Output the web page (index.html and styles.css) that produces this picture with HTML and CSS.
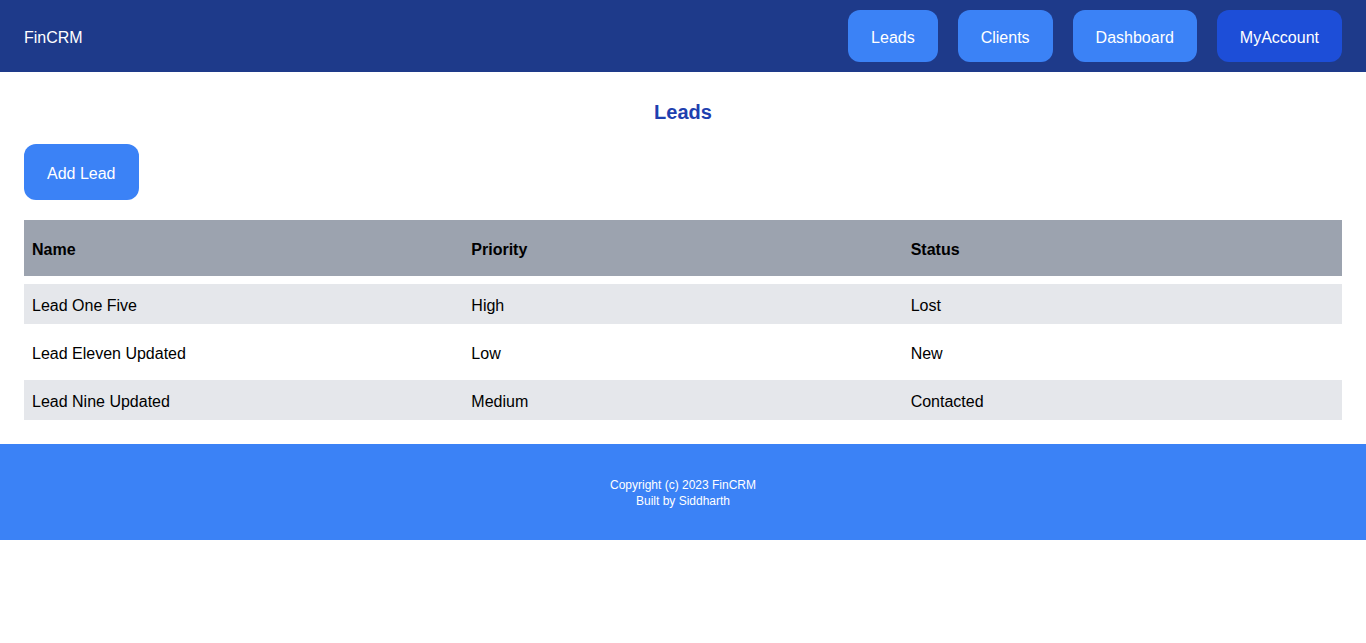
FILE: index.html
```html
<!DOCTYPE html>
<html lang="en">
<head>
<meta charset="utf-8">
<title>FinCRM</title>
<link rel="stylesheet" href="styles.css">
</head>
<body>
<nav class="nav">
  <a class="brand">FinCRM</a>
  <div class="nav-links">
    <a class="nav-btn">Leads</a>
    <a class="nav-btn">Clients</a>
    <a class="nav-btn">Dashboard</a>
    <a class="nav-btn nav-btn-dark">MyAccount</a>
  </div>
</nav>
<main class="main">
  <h1 class="title">Leads</h1>
  <a class="add-btn">Add Lead</a>
  <table class="leads">
    <thead>
      <tr><th>Name</th><th>Priority</th><th>Status</th></tr>
    </thead>
    <tbody>
      <tr class="shade"><td>Lead One Five</td><td>High</td><td>Lost</td></tr>
      <tr><td>Lead Eleven Updated</td><td>Low</td><td>New</td></tr>
      <tr class="shade"><td>Lead Nine Updated</td><td>Medium</td><td>Contacted</td></tr>
    </tbody>
  </table>
</main>
<footer class="footer">
  <p>Copyright (c) 2023 FinCRM</p>
  <p>Built by Siddharth</p>
</footer>
</body>
</html>
```
FILE: styles.css
```css
* { box-sizing: border-box; }
body {
  margin: 0;
  font-family: "Liberation Sans", Arial, sans-serif;
  font-size: 16px;
  line-height: 24px;
  color: #000;
  background: #fff;
}
.nav {
  height: 72px;
  background: #1e3a8a;
  display: flex;
  align-items: center;
  justify-content: space-between;
  padding: 0 24px;
}
.brand { color: #fff; padding-top: 4px; }
.nav-links { display: flex; gap: 20px; }
.nav-btn {
  display: block;
  padding: 16px 23px 12px;
  border-radius: 12px;
  background: #3b82f6;
  color: #fff;
}
.nav-btn-dark { background: #1d4ed8; }
.main { padding: 0 24px; }
.title {
  margin: 0;
  padding-top: 26px;
  height: 72px;
  text-align: center;
  font-size: 20px;
  line-height: 28px;
  font-weight: 700;
  color: #1e40af;
}
.add-btn {
  display: inline-block;
  padding: 18px 23px 14px;
  border-radius: 12px;
  background: #3b82f6;
  color: #fff;
  vertical-align: top;
}
.leads {
  width: 100%;
  table-layout: fixed;
  border-collapse: separate;
  border-spacing: 0 8px;
  margin-top: 12px;
}
.leads th, .leads td {
  text-align: left;
  padding: 10px 8px 6px;
}
.leads th {
  background: #9ca3af;
  padding: 18px 8px 14px;
  font-weight: 700;
}
.leads tr.shade td { background: #e5e7eb; }
.footer {
  margin-top: 16px;
  background: #3b82f6;
  color: #fff;
  text-align: center;
  padding: 33px 0 31px;
  font-size: 12px;
  line-height: 16px;
}
.footer p { margin: 0; }
```
